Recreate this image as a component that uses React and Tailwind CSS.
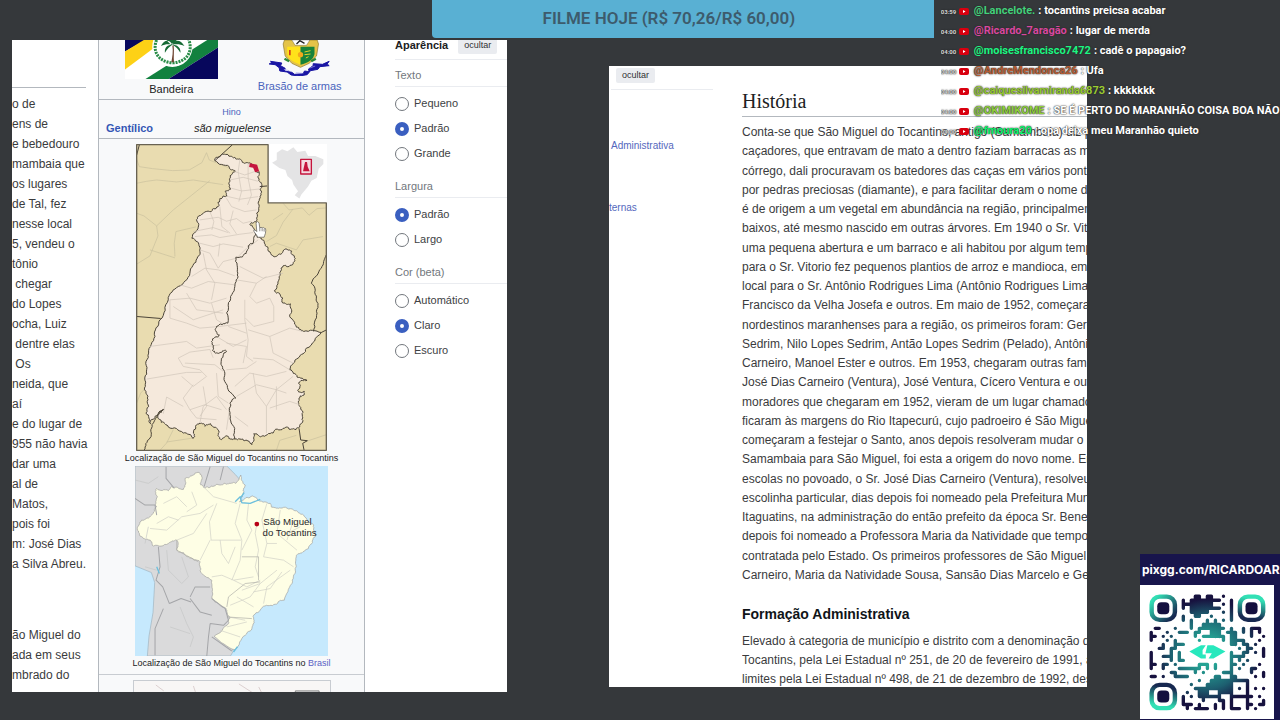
import React, { useState } from 'react';

const sans = "font-['Liberation_Sans',Arial,sans-serif]";

const articleFragments = [
  'o de', 'ens de', 'e bebedouro', 'mambaia que', 'os lugares', 'de Tal, fez', 'nesse local', '5, vendeu o',
  'tônio', ' chegar', 'do Lopes', 'ocha, Luiz', ' dentre elas', ' Os', 'neida, que', 'aí',
  'e do lugar de', '955 não havia', 'dar uma', 'al de', 'Matos,', 'pois foi', 'm: José Dias', 'a Silva Abreu.',
];

const closingFragments = ['ão Miguel do', 'ada em seus', 'mbrado do'];

const historyLines = [
  'Conta-se que São Miguel do Tocantins, antigo (Samambaia) diz p',
  'caçadores, que entravam de mato a dentro faziam barracas as ma',
  'córrego, dali procuravam os batedores das caças em vários ponto',
  'por pedras preciosas (diamante), e para facilitar deram o nome de',
  'é de origem a um vegetal em abundância na região, principalmen',
  'baixos, até mesmo nascido em outras árvores. Em 1940 o Sr. Vito',
  'uma pequena abertura e um barraco e ali habitou por algum temp',
  'para o Sr. Vitorio fez pequenos plantios de arroz e mandioca, em',
  'local para o Sr. Antônio Rodrigues Lima (Antônio Rodrigues Lima',
  'Francisco da Velha Josefa e outros. Em maio de 1952, começaram',
  'nordestinos maranhenses para a região, os primeiros foram: Gern',
  'Sedrim, Nilo Lopes Sedrim, Antão Lopes Sedrim (Pelado), Antônio',
  'Carneiro, Manoel Ester e outros. Em 1953, chegaram outras famíl',
  'José Dias Carneiro (Ventura), José Ventura, Cícero Ventura e outr',
  'moradores que chegaram em 1952, vieram de um lugar chamado',
  'ficaram às margens do Rio Itapecurú, cujo padroeiro é São Migue',
  'começaram a festejar o Santo, anos depois resolveram mudar o n',
  'Samambaia para São Miguel, foi esta a origem do novo nome. Em',
  'escolas no povoado, o Sr. José Dias Carneiro (Ventura), resolveu',
  'escolinha particular, dias depois foi nomeado pela Prefeitura Muni',
  'Itaguatins, na administração do então prefeito da época Sr. Bened',
  'depois foi nomeado a Professora Maria da Natividade que tempos',
  'contratada pelo Estado. Os primeiros professores de São Miguel f',
  'Carneiro, Maria da Natividade Sousa, Sansão Dias Marcelo e Ger',
];

const adminLines = [
  'Elevado à categoria de município e distrito com a denominação de',
  'Tocantins, pela Lei Estadual nº 251, de 20 de fevereiro de 1991, a',
  'limites pela Lei Estadual nº 498, de 21 de dezembro de 1992, des',
];

const chatMessages = [
  { time: '03:59', user: '@Lancelote.', color: 'text-[#43d17c]', text: 'tocantins preicsa acabar' },
  { time: '04:00', user: '@Ricardo_7aragão', color: 'text-[#d8489f]', text: 'lugar de merda' },
  { time: '04:00', user: '@moisesfrancisco7472', color: 'text-[#1df582]', text: 'cadê o papagaio?' },
  { time: '04:00', user: '@AndreMendonca26', color: 'text-[#b75c34]', text: 'Ufa' },
  { time: '04:00', user: '@caiquesilvamiranda6873', color: 'text-[#9acb32]', text: 'kkkkkkk' },
  { time: '04:00', user: '@OKIMIKOME', color: 'text-[#8fce3c]', text: 'SE É PERTO DO MARANHÃO COISA BOA NÃO' },
  { time: '04:00', user: '@fmoura20', color: 'text-[#0df56e]', text: 'opa deixa meu Maranhão quieto' },
];

const settings = [
  { name: 'texto', title: 'Texto', options: ['Pequeno', 'Padrão', 'Grande'], initial: 'Padrão' },
  { name: 'largura', title: 'Largura', options: ['Padrão', 'Largo'], initial: 'Padrão' },
  { name: 'cor', title: 'Cor (beta)', options: ['Automático', 'Claro', 'Escuro'], initial: 'Claro' },
];

// filled columns of each QR row, finder patterns excluded
const qrRows = [
  [11, 12, 14, 15, 18],
  [8, 10, 11, 12, 13, 14, 15, 16, 17, 20],
  [8, 9, 10, 11, 12, 13, 14, 15, 18, 20],
  [8, 10, 11, 12, 13, 14, 15, 16, 17, 20],
  [10, 11, 12, 13, 14, 18, 20],
  [8, 11, 12, 15, 20],
  [8, 10, 14, 16, 18, 20],
  [10, 13, 14, 15, 16, 17],
  [1, 2, 6, 10, 12, 13, 14, 15, 16, 17, 18, 20, 23, 25, 26, 27],
  [0, 4, 7, 8, 9, 11, 12, 15, 16, 17, 19, 20, 21, 23, 25, 27],
  [0, 1, 3, 5, 11, 13, 14, 15, 16, 17, 18, 20, 21, 25, 28],
  [0, 4, 6, 12, 18, 20, 21, 22, 23, 27],
  [3, 6, 7, 8, 20, 21, 23, 24, 26],
  [2, 3, 5, 6, 22, 24, 25, 28],
  [0, 5, 7, 20, 23, 24, 26, 28],
  [0, 3, 4, 5, 7, 20, 21, 22, 23, 28],
  [0, 5, 7, 8, 20, 22, 24],
  [0, 1, 3, 4, 6, 12, 13, 14, 16, 20, 21, 23, 27],
  [0, 3, 7, 8, 9, 10, 11, 12, 14, 16, 20, 22, 25, 26],
  [5, 6, 11, 13, 18, 19, 20, 25, 28],
  [0, 1, 3, 6, 7, 8, 9, 16, 17, 20, 21, 26, 28],
  [12, 15, 16, 17, 18, 19, 20, 21, 22, 23, 24],
  [10, 14, 15, 16, 17, 18, 19, 20, 24],
  [11, 12, 13, 14, 15, 16, 17, 18, 19, 20, 22, 24, 26, 28],
  [9, 12, 13, 14, 17, 18, 19, 20, 24],
  [8, 10, 12, 13, 14, 15, 16, 17, 20, 21, 22, 23, 24, 25, 27],
  [8, 13, 17, 18, 20, 24, 28],
  [8, 9, 10, 12, 16, 18, 20, 24, 25, 27, 28],
  [9, 11, 12, 13, 14, 16, 18, 20, 21, 22, 24, 26],
];

const isFilled = (x, y) => Boolean(qrRows[y]) && qrRows[y].includes(x);

const buildQrPath = () => {
  let d = '';
  qrRows.forEach((row, y) => {
    row.forEach((x) => {
      const start = `M${x + 0.5} ${y + 0.5}`;
      d += `${start}h.01`;
      if (isFilled(x + 1, y)) d += `${start}h1`;
      if (isFilled(x, y + 1)) d += `${start}v1`;
      // close the gap in the middle of a 2x2 block
      if (isFilled(x + 1, y) && isFilled(x, y + 1) && isFilled(x + 1, y + 1)) d += `${start}l1 1`;
    });
  });
  return d;
};

// turns a coarse list of points into a ragged border line
const ragged = (points, size) => {
  let line = points;
  let amount = size;
  for (let pass = 0; pass < 3; pass++) {
    const next = [];
    line.forEach(([x, y], i) => {
      next.push([x, y]);
      if (i === line.length - 1) return;
      const [nx, ny] = line[i + 1];
      const length = Math.hypot(nx - x, ny - y) || 1;
      const shift = Math.sin(i * 12.9 + x * 3.7 + y * 1.3) * Math.min(amount, length / 4);
      next.push([(x + nx) / 2 - ((ny - y) / length) * shift, (y + ny) / 2 + ((nx - x) / length) * shift]);
    });
    line = next;
    amount /= 1.6;
  }
  return 'M' + line.map(([x, y]) => `${x.toFixed(1)} ${y.toFixed(1)}`).join('L');
};

const tocantinsBorder = [
  [285, 62], [302, 48], [318, 44], [345, 52], [362, 58], [375, 70], [392, 70], [408, 95], [418, 95], [420, 125],
  [426, 135], [424, 165], [418, 200], [412, 240], [390, 254], [404, 270], [412, 292], [428, 300], [445, 325], [468, 350],
  [490, 334], [515, 333], [524, 348], [518, 375], [490, 378], [478, 410], [464, 452], [480, 462], [490, 490], [512, 492],
  [510, 525], [530, 562], [552, 575], [605, 578], [560, 625], [535, 655], [510, 690], [532, 712], [562, 722], [536, 730],
  [534, 752], [554, 755], [538, 775], [540, 800], [548, 830], [540, 862], [515, 868], [490, 866], [460, 880], [425, 890],
  [402, 882], [396, 915], [375, 903], [345, 898], [325, 890], [305, 900], [298, 878], [272, 852], [255, 860], [240, 850],
  [222, 870], [220, 896], [190, 880], [145, 862], [124, 848], [116, 825], [132, 808], [105, 830], [92, 852], [78, 820],
  [84, 780], [76, 740], [80, 690], [86, 640], [105, 590], [120, 540], [145, 480], [175, 440], [210, 400], [232, 355],
  [240, 322], [216, 295], [235, 262], [233, 232], [270, 215], [295, 200], [300, 176], [322, 168], [318, 152], [332, 148],
  [330, 115], [347, 94], [328, 80], [285, 62],
];

const tocantinsRiver = [
  [404, 270], [402, 300], [385, 318], [372, 345], [348, 352], [354, 400], [345, 440], [326, 488], [324, 550], [290, 560],
  [288, 575], [298, 585], [275, 605], [278, 632], [298, 640], [320, 634], [304, 665], [315, 700], [325, 750], [348, 775],
  [332, 800], [334, 850], [345, 898],
];

const brazilBorder = [
  [110, 85], [145, 92], [155, 80], [190, 88], [195, 55], [215, 48], [237, 38], [245, 60], [242, 75], [258, 82],
  [275, 78], [300, 75], [325, 72], [345, 70], [362, 45], [375, 75], [372, 95], [358, 125], [390, 112], [410, 115],
  [450, 130], [455, 142], [480, 144], [520, 150], [550, 165], [580, 195], [588, 225], [575, 250], [548, 275], [528, 290],
  [525, 330], [515, 370], [492, 420], [465, 432], [430, 438], [400, 465], [398, 495], [375, 525], [345, 568], [282, 528],
  [325, 490], [328, 470], [318, 445], [275, 415], [275, 360], [240, 330], [240, 305], [205, 290], [172, 272], [170, 240],
  [145, 250], [100, 258], [95, 245], [70, 235], [52, 210], [65, 180], [95, 165], [110, 140], [112, 110], [110, 85],
];

const YoutubeIcon = () => (
  <svg viewBox="0 0 20 14" className="h-[7px] w-[10px] shrink-0">
    <rect width="20" height="14" rx="4" fill="#d8000f" />
    <path d="M8 4l5 3-5 3z" fill="#fff" />
  </svg>
);

const Flag = () => (
  <svg viewBox="380 30 277 116" className="h-[39px] w-[93px]" preserveAspectRatio="none">
    <path d="M380 30h277v116h-277z" fill="#fff" />
    <path d="M380 30h62l-62 34z" fill="#07075c" />
    <path d="M380 64l56-34h62l-118 88z" fill="#fdd116" />
    <path d="M441 146L625 30h32v22L510 146z" fill="#12813f" />
    <path d="M510 146L657 52v94z" fill="#07075c" />
    <circle cx="521" cy="50" r="60" fill="#fff" />
    <path d="M474 30c-14 36 8 66 48 68c40-2 62-32 48-68" fill="none" stroke="#2a8d48" strokeWidth="9" strokeDasharray="6 3" />
    <path d="M521 46c3 18 0 34-3 50h8c-2-16 1-32-1-50z" fill="#6e4430" />
    <path d="M521 44c-8-16-24-16-34 4c12-6 22-6 34-4zm0 0c8-16 24-16 36 4c-12-6-24-6-36-4zm0 0c-16 0-24 10-22 24c6-12 14-18 22-24zm0 0c16 0 26 10 24 24c-6-12-14-18-24-24zm-4 0l-14-14h32z" fill="#176a35" />
  </svg>
);

const CoatOfArms = () => (
  <svg viewBox="804 30 182 108" className="h-[36px] w-[61px]">
    <path d="M850 30h98l4 12-6 36-22 22-26 12-26-12-20-22-6-36z" fill="#e4c348" stroke="#8b7629" strokeWidth="2" />
    <path d="M858 50h40v54c-24-8-38-18-40-34z" fill="#ffe21a" />
    <path d="M898 50h42v22c-4 18-18 26-42 32z" fill="#17833a" />
    <path d="M872 30h54l-10 16h-34z" fill="#fff" stroke="#333" />
    <path d="M886 42l10-10 14 8" stroke="#222" strokeWidth="4" fill="none" />
    <circle cx="898" cy="74" r="8" fill="#f3a81c" />
    <path d="M866 60v16" stroke="#d1391b" strokeWidth="5" />
    <path d="M910 66l18-4m-18 12l18-2m-14 12l8-4" stroke="#e2d22b" strokeWidth="3" />
    <path d="M850 86l14 8m80-8l-14 8" stroke="#2c8a38" strokeWidth="7" />
    <path
      d="M808 94l34 5-4 8 14 8-2 8 22 4 8 6 26-2 4-8 14 2-2-8 14-10 0-6 28 2 20-9-6 8 6 5-28 3-6 8-22 4-10 12-24 4-24-3-12-9-22-3-2-10-12-9-18-2 8-5z"
      fill="#1a16a4"
      stroke="#1a16a4"
      strokeWidth="3"
      strokeLinejoin="round"
    />
    <path d="M848 118l16 4m20 6l20 2m22-16l16-6" stroke="#a8a4ee" strokeWidth="2" />
  </svg>
);

const BrazilSilhouette = () => (
  <path
    d="M457 68l14-8 0-22 16-10 16 6 18-12 12 14 24-4 8 16 22 0 24 10 0 14-14 14-6 28-16 8-10 18-20 24-6 12-14-10 10-12-14-20-4-14-14-12-6-18-18-6z"
    fill="#e4e4e5"
  />
);

const TocantinsMap = () => (
  <svg viewBox="48 12 574 922" className="h-[307px] w-[191px]" preserveAspectRatio="none" strokeLinejoin="round" role="img" aria-label="Tocantins">
    <path d="M48 12h574v922h-574z" fill="#e9dcb0" />
    <g fill="none" stroke="#c9bf9d" strokeWidth="2">
      <path d="M50 58l8 22 40 6 60 6 50-2 38-22 14-30 8 22 60 24M50 130l30-6 30-4 60 6 50-6 50 8 40 6M50 220l22 8 38 30 50-48 110-88M110 258l4 30-12 30-12 30-42 26M165 350l-2-40 5-35 60-14M90 330l75 24M460 240l30-20M440 305l30-18 20-40 30-40M450 320l20-10 60 20 20-30 60-10M50 790l12-30 20-20M160 870l-20 40-20 22M220 895l-80 12M490 190l18 20 40-6 20 22 24-20 28-2M470 932l10-30 50-15M560 905l60-20" />
    </g>
    <path d={ragged(tocantinsBorder, 5)} fill="#f5e9dc" stroke="#4a4337" strokeWidth="3" />
    <g fill="none" stroke="#cfc4b8" strokeWidth="2">
      <path d="M345 95l30 10 35-12M330 120l40-8 45 12M335 145l30 8 55-6M325 170l35 8 55-8M360 60l-5 35 10 60-8 30M385 70l0 45 10 50-12 30M320 175l15 25 40 15 35-5M240 240l55-8 25 12 30-8 20 14 25-6M270 215l12 30-6 25M300 200l6 60 25 20M340 212l-10 40 20 30M225 290l50-5 25 8 60-10 40-5M240 310l40 10 30-8 60 10M220 275l60-12 45 15" />
      <path d="M240 330l30 10 25 45 15-20 40-10M295 350l5-40M215 410l40-25 40 5 50 18M250 340l10 50 25 40-10 50M180 435l35 10 50-20 80 10M150 480l60-5 60 15 50-15M200 460l30 50 80 10M275 490l15 50 25 15M150 480l0 55 50 15 40 15 60-5M160 500l60 40 90-30" />
      <path d="M355 350l20-20 40-30M360 380l70 35 60-15M350 420l60 10 30-20M410 430l-20 40 20 20 40-15 12 25 0 45-60 15-25-25M375 480l0 60 10 60-5 50 20 15M385 570l65 20 60-25 40 10M450 590l10 50 60 30M400 655l60 5 50 30M325 560l55 20M320 610l60 10-10 50M300 560l80-10M290 590l50 30 40-20" />
      <path d="M90 620l110-15 30 20 70-10M80 718l120-20 45 0M175 655l35-18 60-8 10 25M175 655l15 25 50 10 20 20-40 30-35-30M195 670l90 5 25 20M220 735l-30 40 20 35 45-15 50 15M190 800l-50-28-10 50M210 810l20 25 60 5M250 740l10 60-20 30M290 700l5 70 30 20M240 850l10-50 40-30 30 40" />
      <path d="M320 690l60-5 30-20M345 740l45-40 50 10 60-15M350 770l60-35 60 15 50-40M400 700l10 60 30 40M440 800l30-50 30 10M440 800l0 80M450 805l60-20 30 10M470 740l0 70M330 800l-10 70M345 830l40 30" />
    </g>
    <path d={ragged(tocantinsRiver, 5)} fill="none" stroke="#4a4337" strokeWidth="3" />
    <path d="M285 62L338 14M50 530l72 6M605 578l16-8M50 45l8-30" fill="none" stroke="#4a4337" strokeWidth="3" />
    <path d={ragged([[620, 345], [605, 385], [575, 430], [590, 475], [592, 520], [582, 575]], 5)} fill="none" stroke="#4a4337" strokeWidth="3" />
    <path d={ragged([[130, 810], [96, 855], [90, 895], [72, 932]], 4)} fill="none" stroke="#4a4337" strokeWidth="3" />
    <path d="M538 866l5 35 20 2-14 8 4 20M420 140l22-2" fill="none" stroke="#4a4337" strokeWidth="3" />
    <path d="M390 70l22 4 6 20-12 3-6-14-12-2z" fill="#c5153d" />
    <path d="M445 12h180v177h-180z" fill="#fff" />
    <BrazilSilhouette />
    <path d="M543 58h32v44h-32z" fill="#f4dbe0" stroke="#c5153d" strokeWidth="4" />
    <path d="M556 66l6 0 2 14 6 14-20 0 2-10z" fill="#c5153d" />
    <path d="M50 14H445V189H620V932H50z" fill="none" stroke="#686252" strokeWidth="4" />
    <path
      d="M409 250q4-10 9 0l2 14q4-4 7 0q4-3 6 1q6-1 5 6l-1 9q-2 6-4 12h-19q-4-9-11-16q-4-7 3-6l5 5z"
      fill="#fff"
      stroke="#56534e"
      strokeWidth="2"
    />
    <path d="M420 264v10M427 265v9M433 267v8" stroke="#56534e" strokeWidth="2" />
  </svg>
);

const BrazilMap = () => (
  <svg viewBox="45 18 578 569" className="h-[190px] w-[193px]" strokeLinejoin="round" role="img" aria-label="Brasil">
    <path d="M45 18h578v569h-578z" fill="#c6e9fd" />
    <path d="M45 18H320l25 25 18 20-4 60-30 400 10 50-8 14H82l5-60 12-70 5-90-10-30-49-20z" fill="#dadadb" stroke="#9fb4c0" strokeWidth="2" />
    <path d={ragged(brazilBorder, 4)} fill="#fefee5" stroke="#a0a09e" strokeWidth="2" />
    <g fill="none" stroke="#a4a5a8" strokeWidth="3">
      <path d="M45 115l30 20 30 0 5 30M138 20l0 35 25 30M270 20l-18 60M310 20l-10 40M115 260l5 60-12 40 20 20 20 50M148 430l35-15 30 10M130 445l-25 60 0 80M210 410l15-30 45 0M210 415l30 40 35 10M275 415l40 30 10 35-15 15-40-5M270 490l-5 40-5 57M275 530l60 42" />
    </g>
    <g fill="none" stroke="#c4c5c6" strokeWidth="2">
      <path d="M45 60l40 10 30-20M85 200l-10 50M140 270l5 60 40 40 20-20-20-60M180 440l20 50 20 40-10 30M150 500l60 20M75 320l35 10" />
    </g>
    <g fill="none" stroke="#cfcec6" strokeWidth="2">
      <path d="M130 130l40-20 30 30M90 205l50 5 45-40 55-10 40-25M110 190l35-20 30 10M170 240l50-20 40-60M215 95l15 40-30 20M250 80l30 30 70 20M290 130l-22 55 5 55 90 0M360 130l-15 60 20 50-5 60-25 60M385 130l-5 50 15 30-30 60M410 190l-5 30 10 50-10 50 10 30M440 130l-15 50 15 70 30 0M480 150l-10 70 60 50M440 250l-10 40 60 10 30 20M300 240l5 40 20 30 20-50M270 240l-30 60M275 350l30-5 35 15 60-10M340 360l40 20 40-20M365 390l55-20 50-40M330 435l60-25 30-40M400 395l50-10 35-50M430 430l10-50 70-50M325 470l50 10M320 500l60-15M300 510l60 20M350 410l50 30M520 180l-20 60M540 200l-40 20" />
    </g>
    <g fill="none" stroke="#acaca6" strokeWidth="2">
      <path d="M170 240l0 30 65 35M365 290l50 0 0 70M320 440l5-30 50-40 45-5M320 470l75 5" />
    </g>
    <path d="M345 125l15-15 5 18 25 2 30-12M372 98l-10 14M110 320l8 20M340 575l12-16" fill="none" stroke="#6cbfdd" strokeWidth="4" />
    <circle cx="410" cy="192" r="7" fill="#b80016" />
    <g fill="#27272a" fontSize="29" fontFamily="Liberation Sans, Arial, sans-serif">
      <text x="429" y="196">São Miguel</text>
      <text x="427" y="228">do Tocantins</text>
    </g>
  </svg>
);

const QrFinder = ({ x, y, from, to }) => (
  <g>
    <linearGradient id={`finder-${x}-${y}`} x1={from[0]} y1={from[1]} x2={to[0]} y2={to[1]}>
      <stop offset="0.1" stopColor="#32e0b5" />
      <stop offset="0.9" stopColor="#172850" />
    </linearGradient>
    <rect x={x + 0.6} y={y + 0.6} width="5.8" height="5.8" rx="2" fill="none" stroke={`url(#finder-${x}-${y})`} strokeWidth="1.1" />
    <rect x={x + 2} y={y + 2} width="3" height="3" rx="1" fill="#14103f" />
  </g>
);

const QrCode = () => (
  <svg viewBox="-2.3 -2.3 33.4 33.4" className="h-[134px] w-[134px] bg-white" role="img" aria-label="QR">
    <defs>
      <radialGradient id="modules" gradientUnits="userSpaceOnUse" cx="14.5" cy="14.5" r="14">
        <stop offset="0.25" stopColor="#25a394" />
        <stop offset="0.65" stopColor="#1d5f70" />
        <stop offset="0.95" stopColor="#17123f" />
      </radialGradient>
    </defs>
    <path d={buildQrPath()} stroke="url(#modules)" strokeWidth="0.84" strokeLinecap="round" fill="none" />
    <QrFinder x={0} y={0} from={[0, 0]} to={[1, 1]} />
    <QrFinder x={22} y={0} from={[0.6, 0]} to={[0.4, 1]} />
    <QrFinder x={0} y={22} from={[0.4, 1]} to={[0.6, 0]} />
    <path d="M10 14.3l2.9-1.6h1.2l-.8 1.2v1.1h.8v1h-1.2z" fill="#28e8bd" />
    <path d="M14.5 12.7h1.5l3 1.6-3 1.7h-1.2l.8-1.3h-1.6z" fill="#28e8bd" />
  </svg>
);

const SettingGroup = ({ group }) => {
  const [selected, setSelected] = useState(group.initial);

  return (
    <fieldset className="mb-[10px]">
      <legend className="block w-full border-b border-[#eaecf0] pb-px text-[11px] leading-5 text-[#72777d]">{group.title}</legend>
      <div className="pt-[4px]">
        {group.options.map((option) => (
          <label key={option} className="flex h-[25px] items-center gap-[5px] text-[11px] text-[#404244]">
            <input
              type="radio"
              name={group.name}
              checked={selected === option}
              onChange={() => setSelected(option)}
              className="size-[14px] shrink-0 appearance-none rounded-full border border-[#72777d] bg-white checked:border-[5px] checked:border-[#3a5fc0]"
            />
            {option}
          </label>
        ))}
      </div>
    </fieldset>
  );
};

const Infobox = () => (
  <div className="flex flex-col overflow-hidden border-x border-[#b3b8be] bg-[#f8f9fa] text-[11px] text-[#202122]">
    <div className="grid shrink-0 grid-cols-2 border-b border-[#b3b8be] pl-2">
      <div className="flex flex-col items-center">
        <Flag />
        <span className="leading-5">Bandeira</span>
      </div>
      <div className="flex flex-col items-center">
        <CoatOfArms />
        <a href="#brasao" className="leading-5 text-[#4a64bd]">Brasão de armas</a>
      </div>
    </div>
    <div className="shrink-0 border-b border-[#b3b8be] px-[7px] pt-[4px] pb-[2px]">
      <div className="text-center text-[9px] leading-4">
        <a href="#hino" className="text-[#4a64bd]">Hino</a>
      </div>
      <div className="grid grid-cols-[88px_1fr] leading-4">
        <a href="#gentilico" className="font-bold text-[#3457b5]">Gentílico</a>
        <span className="italic">são miguelense</span>
      </div>
    </div>
    <div className="flex shrink-0 flex-col items-center border-b border-[#c8ccd1] pt-[5px] pb-[3px] text-[9px] leading-[15px]">
      <TocantinsMap />
      <span className="whitespace-nowrap">Localização de São Miguel do Tocantins no Tocantins</span>
      <BrazilMap />
      <span className="whitespace-nowrap">
        Localização de São Miguel do Tocantins no <a href="#brasil" className="text-[#5a5fc4]">Brasil</a>
      </span>
    </div>
    <div className="mx-auto mt-[5px] h-10 w-[198px] shrink-0 border border-[#c8ccd1] bg-[#f8f6f5]">
      <svg viewBox="0 0 198 12" className="w-full">
        <path d="M22 4l8 6M60 5l2 6M106 3l14 9M126 6l3 6" stroke="#dccfcf" fill="none" />
        <path d="M163 10h24v3h-24z" fill="#ddd" stroke="#888" />
      </svg>
    </div>
  </div>
);

const AppearancePanel = () => (
  <aside className="-mt-1 pl-[30px]">
    <div className="mb-[5px] flex h-6 items-center gap-[10px] border-b border-[#eaecf0] pb-[4px]">
      <h2 className="text-[11px] font-bold text-[#202122]">Aparência</h2>
      <button className="h-4 rounded-xs bg-[#eaecf0] px-[6px] text-[9px] text-[#303133]">ocultar</button>
    </div>
    {settings.map((group) => (
      <SettingGroup key={group.name} group={group} />
    ))}
  </aside>
);

const MunicipalityPage = () => (
  <section className="grid grid-cols-[86px_267px_1fr] overflow-hidden bg-white">
    <article className="overflow-hidden text-[12px] leading-5 whitespace-pre text-[#3a3b3d]">
      <div className="mr-3 mb-[6px] h-12 border-b border-[#b3b8be]" />
      {articleFragments.map((line) => (
        <div key={line}>{line}</div>
      ))}
      <div className="mt-[51px]">
        {closingFragments.map((line) => (
          <div key={line}>{line}</div>
        ))}
      </div>
    </article>
    <Infobox />
    <AppearancePanel />
  </section>
);

const HistoryPage = () => (
  <section className="mt-[26px] mb-[5px] grid grid-cols-[104px_1fr] gap-x-[29px] overflow-hidden bg-white">
    <nav className="flex flex-col items-start text-[10px]">
      <div className="mb-[46px] ml-[2px] h-6 self-stretch border-b border-[#eaecf0] pt-[2px] pl-[5px]">
        <button className="flex h-[15px] items-center rounded-xs bg-[#eaecf0] px-[6px] text-[9px] text-[#303133]">ocultar</button>
      </div>
      <a href="#administrativa" className="pl-[2px] leading-5 text-[#5468bd]">Administrativa</a>
      <a href="#externas" className="mt-[42px] leading-5 text-[#5468bd]">ternas</a>
    </nav>
    <article className="overflow-hidden text-[12px] whitespace-nowrap text-[#3a3b3d]">
      <h2 className="mb-[6px] border-b border-[#b3b8be] pt-[21px] pb-px font-['Liberation_Serif',serif] text-[20px] leading-7 text-[#202122]">
        História
      </h2>
      <div className="flex h-[462px] flex-col justify-between leading-[19px]">
        {historyLines.map((line) => (
          <div key={line}>{line}</div>
        ))}
      </div>
      <h3 className="mt-[15px] mb-1 text-[14px] leading-7 font-bold text-[#101418]">Formação Administrativa</h3>
      <div className="leading-[19px]">
        {adminLines.map((line) => (
          <div key={line}>{line}</div>
        ))}
      </div>
    </article>
  </section>
);

const ChatOverlay = () => (
  <ul className="absolute top-0 right-0 left-[73.5%] overflow-hidden pt-px font-[Roboto,sans-serif] text-[11px] font-bold whitespace-nowrap text-white">
    {chatMessages.map((message) => (
      <li key={message.user} className="flex h-5 items-center [text-shadow:0_0_1px_#222,0_0_2px_#333]">
        <span className="w-[18px] text-[6px] text-[#d4d4d4]">{message.time}</span>
        <YoutubeIcon />
        <span className={`ml-[5px] ${message.color}`}>{message.user}</span>
        <span className="ml-[3px]">: {message.text}</span>
      </li>
    ))}
  </ul>
);

const DonationCode = () => (
  <div className="absolute right-0 bottom-0 w-[140px] overflow-hidden bg-[#18154c] pb-px">
    <p className="pl-[2px] font-[Inter,sans-serif] text-[12px] leading-[31px] font-bold whitespace-nowrap text-white">pixgg.com/RICARDOARAGAO</p>
    <QrCode />
  </div>
);

const App = () => {
  return (
    <div className={`relative flex h-screen flex-col overflow-hidden bg-[#35383b] ${sans}`}>
      <header className="ml-[33.75%] flex h-[38px] w-[39.2%] shrink-0 items-center justify-center rounded-bl-sm bg-[#59b0d3] pr-7">
        <h1 className="font-[Roboto,sans-serif] text-[17px] font-semibold whitespace-nowrap text-[#3d5b6c]">FILME HOJE (R$ 70,26/R$ 60,00)</h1>
      </header>
      <main className="mt-[2px] mb-7 grid min-h-0 flex-1 grid-cols-[495fr_478fr_91fr] grid-rows-1 gap-x-[102px] pl-3">
        <MunicipalityPage />
        <HistoryPage />
      </main>
      <ChatOverlay />
      <DonationCode />
    </div>
  );
};

export default App;
